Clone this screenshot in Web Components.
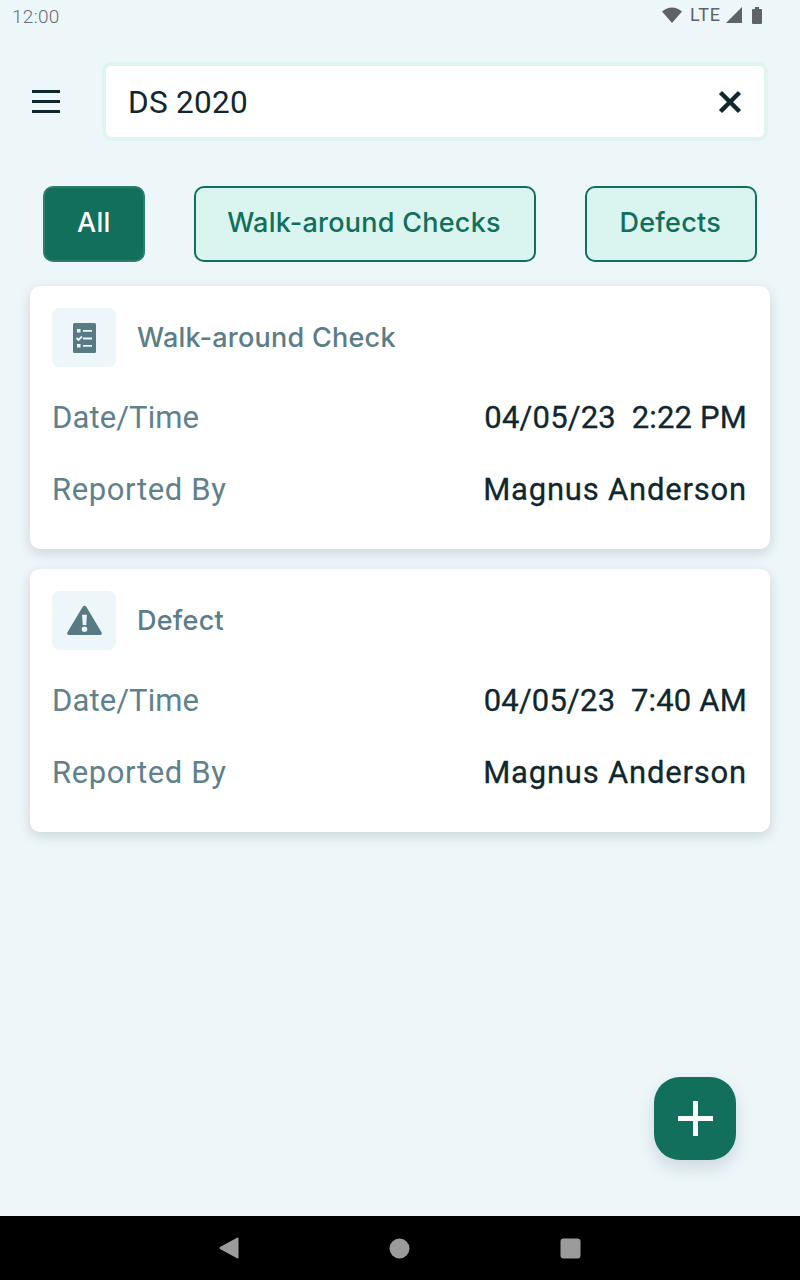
<!DOCTYPE html>
<html lang="en">
<head>
<meta charset="UTF-8">
<title>Search</title>
<style>
  html, body { margin: 0; height: 1280px; background: #edf6f9; overflow: hidden; }
  body { font-family: "Inter", "Noto Sans", sans-serif; color: #10272e; }
  app-screen { height: 1280px; }
</style>
</head>
<body>
<app-screen>
  <status-bar slot="status" time="12:00"></status-bar>
  <search-row slot="search" value="DS 2020"></search-row>
  <filter-row slot="filters">
    <filter-chip active style="padding: 0 32px 4px">All</filter-chip>
    <filter-chip>Walk-around Checks</filter-chip>
    <filter-chip style="padding: 0 34px 4px 32px">Defects</filter-chip>
  </filter-row>
  <report-card type="check" title="Walk-around Check" when="04/05/23&nbsp;&nbsp;2:22 PM" by="Magnus Anderson"></report-card>
  <report-card type="defect" title="Defect" when="04/05/23&nbsp;&nbsp;7:40 AM" by="Magnus Anderson"></report-card>
  <add-button slot="fab"></add-button>
  <nav-bar slot="nav"></nav-bar>
</app-screen>

<script>
  class AppScreen extends HTMLElement {
    constructor() {
      super();
      this.attachShadow({mode: 'open'}).innerHTML = `
        <style>
          :host { display: flex; flex-direction: column; background: #edf6f9; }
          main { flex: 1; position: relative; display: flex; flex-direction: column; }
          .cards { display: flex; flex-direction: column; gap: 20px; padding: 0 30px; }
          .fab { position: absolute; right: 64px; bottom: 56px; }
        </style>
        <slot name="status"></slot>
        <main>
          <slot name="search"></slot>
          <slot name="filters"></slot>
          <div class="cards"><slot></slot></div>
          <div class="fab"><slot name="fab"></slot></div>
        </main>
        <slot name="nav"></slot>`;
    }
  }

  class StatusBar extends HTMLElement {
    constructor() {
      super();
      this.attachShadow({mode: 'open'});
    }
    connectedCallback() {
      this.shadowRoot.innerHTML = `
        <style>
          :host { display: flex; height: 32px; align-items: center; justify-content: space-between;
                  padding: 0 38px 0 12px; font-family: Roboto, sans-serif; color: #5f6368; }
          .time { font-size: 19px; font-weight: 300; letter-spacing: .3px; color: #666c70; }
          .icons { display: flex; align-items: center; margin-top: -2px; }
          .lte { font-size: 18px; letter-spacing: .9px; color: #5f6368; line-height: 20px; margin: 0 5px 0 8px; }
          svg { display: block; fill: #5f6368; }
        </style>
        <span class="time">${this.getAttribute('time')}</span>
        <span class="icons">
          <svg width="20" height="16" viewBox="0 0 20 16"><path d="M0 4.500Q10-3.500 20 4.500L10 16Z"/></svg>
          <span class="lte">LTE</span>
          <svg width="16" height="16" viewBox="0 0 16 16"><path d="M0 16 16 0V16Z"/></svg>
          <svg width="10" height="17" viewBox="0 0 10 17" style="margin-left:10px"><path d="M3 0H7V2H9Q10 2 10 3V16Q10 17 9 17H1Q0 17 0 16V3Q0 2 1 2H3Z"/></svg>
        </span>`;
    }
  }

  class SearchRow extends HTMLElement {
    constructor() {
      super();
      this.attachShadow({mode: 'open'});
    }
    connectedCallback() {
      this.shadowRoot.innerHTML = `
        <style>
          :host { display: flex; align-items: center; height: 79px; margin-top: 30px; padding: 0 32px; }
          .menu { width: 28px; height: 23px; margin-right: 42px; display: block; }
          .box { flex: 1; height: 70px; background: #fff; border: 4px solid #def5f0; border-radius: 9px;
                 display: flex; align-items: center; justify-content: space-between; padding: 1px 22px 0 22px; }
          .value { font-family: Roboto, sans-serif; font-size: 31.5px; color: #10272e; letter-spacing: .3px; }
          svg { display: block; }
        </style>
        <svg class="menu" viewBox="0 0 28 23"><path d="M0 1.500H28M0 11.500H28M0 21.500H28" stroke="#10272e" stroke-width="3"/></svg>
        <div class="box">
          <span class="value">${this.getAttribute('value')}</span>
          <svg width="24" height="24" viewBox="0 0 24 24"><path d="M2.500 2.500 21.500 21.500M21.500 2.500 2.500 21.500" stroke="#10272e" stroke-width="4.500" fill="none"/></svg>
        </div>`;
    }
  }

  class FilterRow extends HTMLElement {
    constructor() {
      super();
      this.attachShadow({mode: 'open'}).innerHTML = `
        <style>
          :host { display: flex; justify-content: space-between; padding: 0 43px; margin: 45px 0 24px; }
        </style>
        <slot></slot>`;
    }
  }

  class FilterChip extends HTMLElement {
    constructor() {
      super();
      this.attachShadow({mode: 'open'}).innerHTML = `
        <style>
          :host { display: flex; align-items: center; height: 76px; box-sizing: border-box; padding: 0 33px 4px 31px;
                  border: 2px solid #116f5b; border-radius: 10px; background: #daf4ef; color: #116f5b;
                  font-family: Inter, sans-serif; font-size: 27px; font-weight: 500; letter-spacing: .25px; }
          :host([active]) { background: #116f5b; color: #fff; border-color: #2b7f6c; }
        </style>
        <slot></slot>`;
    }
  }

  const ICONS = {
    check: `<svg width="23" height="30" viewBox="0 0 23 30">
      <path fill="#587a85" d="M1.500 0H21.500Q23 0 23 1.500V28.500Q23 30 21.500 30H1.500Q0 30 0 28.500V1.500Q0 0 1.500 0Z"/>
      <path fill="#edf6f9" d="M4 6H7.500V9.500H4ZM4 21H7.500V24.500H4Z"/>
      <path stroke="#edf6f9" stroke-width="1.800" fill="none" d="M10 7.800H19M10 15.500H19M10 22.800H19M3.500 15 5.500 17 9 13.500"/>
    </svg>`,
    defect: `<svg width="35" height="31" viewBox="0 0 36 31">
      <path fill="#587a85" d="M16.300 1.200Q18 -.6 19.700 1.200L35.500 27.500Q36.500 30.500 33.800 30.500H2.200Q-.5 30.500 .5 27.500Z"/>
      <path fill="#edf6f9" d="M15.500 9.500H20.500L19.800 20H16.200Z"/>
      <circle fill="#edf6f9" cx="18" cy="24.500" r="2.800"/>
    </svg>`
  };

  class ReportCard extends HTMLElement {
    constructor() {
      super();
      this.attachShadow({mode: 'open'});
    }
    connectedCallback() {
      const type = this.getAttribute('type');
      this.shadowRoot.innerHTML = `
        <style>
          :host { display: block; height: 263px; box-sizing: border-box; background: #fff; border-radius: 10px;
                  padding: 22px 23px 0 22px; box-shadow: 0 4px 12px rgba(60, 90, 100, .2); font-family: Inter, sans-serif; }
          .head { display: flex; align-items: center; gap: 21px; margin-bottom: 14px; }
          .icon { width: 64px; height: 59px; border-radius: 8px; background: #edf6f9;
                  display: flex; align-items: center; justify-content: center; }
          .title { font-size: 27px; font-weight: 500; color: #5b7d87; letter-spacing: .25px; }
          .row { display: flex; justify-content: space-between; align-items: center; height: 72px;
                 font-family: Roboto, sans-serif; font-size: 31px; }
          .label { color: #5f818b; letter-spacing: .1px; }
          .by { letter-spacing: .62px; }
          .value { color: #10272e; letter-spacing: .18px; -webkit-text-stroke: .3px #10272e; }
          .name { letter-spacing: .8px; }
        </style>
        <div class="head">
          <div class="icon">${ICONS[type]}</div>
          <span class="title">${this.getAttribute('title')}</span>
        </div>
        <div class="row"><span class="label">Date/Time</span><span class="value">${this.getAttribute('when')}</span></div>
        <div class="row"><span class="label by">Reported By</span><span class="value name">${this.getAttribute('by')}</span></div>`;
    }
  }

  class AddButton extends HTMLElement {
    constructor() {
      super();
      this.attachShadow({mode: 'open'}).innerHTML = `
        <style>
          :host { display: flex; width: 82px; height: 83px; align-items: center; justify-content: center;
                  background: #116f5b; border-radius: 26px; box-shadow: 0 8px 16px rgba(60, 90, 100, .18); }
          svg { display: block; }
        </style>
        <svg width="35" height="35" viewBox="0 0 35 35"><path d="M17.500 0V35M0 17.500H35" stroke="#fff" stroke-width="5"/></svg>`;
    }
  }

  class NavBar extends HTMLElement {
    constructor() {
      super();
      this.attachShadow({mode: 'open'}).innerHTML = `
        <style>
          :host { display: flex; height: 64px; align-items: center; justify-content: center; gap: 150px; background: #000; padding-right: 1px; box-sizing: border-box; }
          svg { display: block; fill: #9b9b9b; }
        </style>
        <svg width="20" height="22" viewBox="0 0 20 22"><path d="M18.500 .5Q19.500 .2 19.500 1.500V20.500Q19.500 21.800 18.500 21.500L1 12Q0 11 1 10Z"/></svg>
        <svg width="21" height="21" viewBox="0 0 21 21"><circle cx="10.500" cy="10.500" r="10"/></svg>
        <svg width="21" height="21" viewBox="0 0 21 21"><rect x=".5" y=".5" width="20" height="20" rx="3"/></svg>`;
    }
  }

  customElements.define('app-screen', AppScreen);
  customElements.define('status-bar', StatusBar);
  customElements.define('search-row', SearchRow);
  customElements.define('filter-row', FilterRow);
  customElements.define('filter-chip', FilterChip);
  customElements.define('report-card', ReportCard);
  customElements.define('add-button', AddButton);
  customElements.define('nav-bar', NavBar);
</script>
</body>
</html>
